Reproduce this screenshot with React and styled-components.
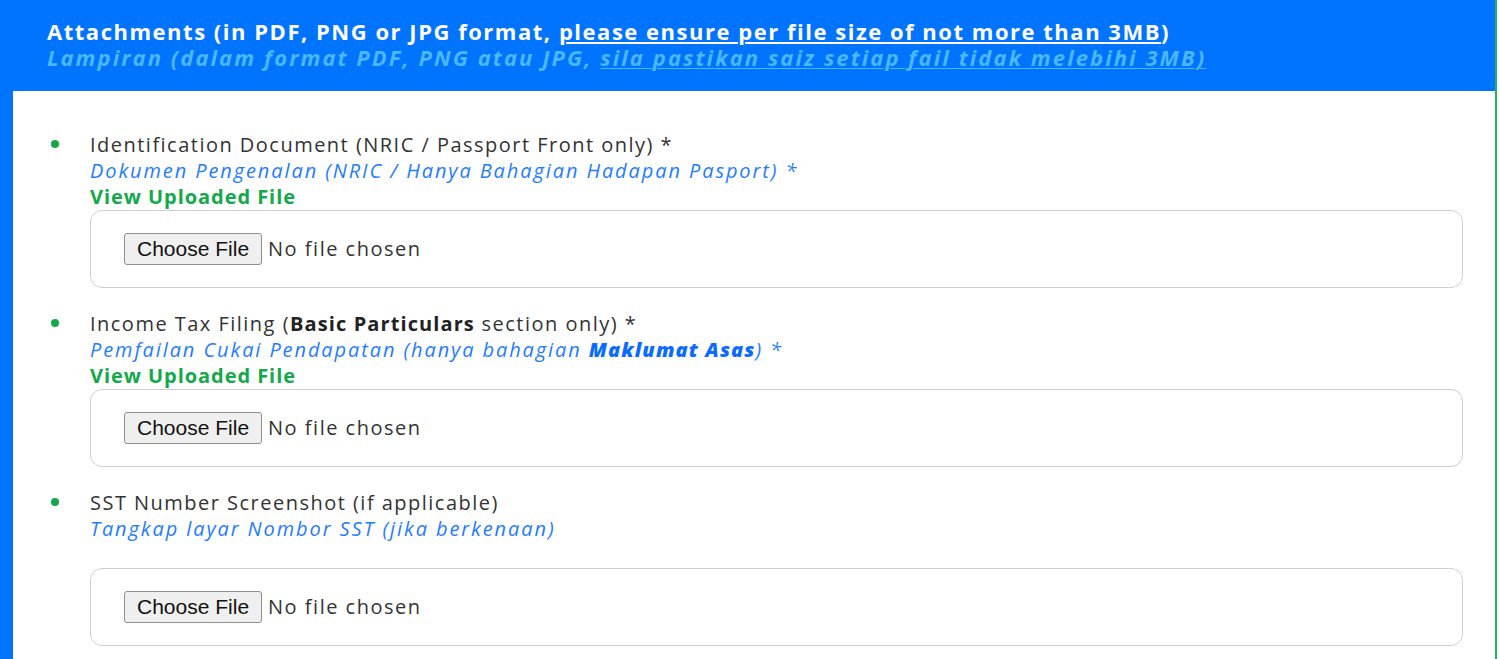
import styled, { createGlobalStyle } from "styled-components"

const GlobalStyle = createGlobalStyle`
  html, body {
    margin: 0;
    padding: 0;
    background: #ffffff;
  }
  body {
    font-family: "Open Sans", "Liberation Sans", sans-serif;
  }
`

const items = [
  {
    title: <>Identification Document (NRIC / Passport Front only) *</>,
    subtitle: <>Dokumen Pengenalan (NRIC / Hanya Bahagian Hadapan Pasport) *</>,
    uploaded: true,
  },
  {
    title: <>Income Tax Filing (<b>Basic Particulars</b> section only) *</>,
    subtitle: <>Pemfailan Cukai Pendapatan (hanya bahagian <b>Maklumat Asas</b>) *</>,
    uploaded: true,
  },
  {
    title: <>SST Number Screenshot (if applicable)</>,
    subtitle: <>Tangkap layar Nombor SST (jika berkenaan)</>,
    uploaded: false,
  },
]

export default function App () {
  return (
    <>
      <GlobalStyle />
      <Card>
        <Header>
          <HeaderTitle>
            Attachments (in PDF, PNG or JPG format, <u>please ensure per file size of not more than 3MB</u>)
          </HeaderTitle>
          <HeaderSubtitle>
            Lampiran (dalam format PDF, PNG atau JPG, <u>sila pastikan saiz setiap fail tidak melebihi 3MB)</u>
          </HeaderSubtitle>
        </Header>

        <Body>
          <List>
            {items.map((item, i) => (
              <Item key={i}>
                <Title>{item.title}</Title>
                <Subtitle>{item.subtitle}</Subtitle>
                <ViewLink $hidden={!item.uploaded}>
                  {item.uploaded ? "View Uploaded File" : "\u00a0"}
                </ViewLink>
                <UploadBox>
                  <FileInput type="file" accept=".pdf,.png,.jpg,.jpeg" />
                </UploadBox>
              </Item>
            ))}
          </List>
        </Body>
      </Card>
    </>
  )
}

const Card = styled.section`
  width: 1497px;
  height: 659px;
  box-sizing: border-box;
  border-left: 13px solid #0073ff;
  border-right: 2px solid #22b35e;
  display: flex;
  flex-direction: column;
  overflow: hidden;
`

const Header = styled.header`
  background: #0073ff;
  height: 91px;
  box-sizing: border-box;
  margin-left: -13px;
  padding: 18px 0 0 47px;
  font-family: "Open Sans", sans-serif;
  font-weight: 700;
  font-size: 22px;
  line-height: 26px;
  white-space: nowrap;
`

const HeaderTitle = styled.div`
  color: #ffffff;
  letter-spacing: 1.52px;

  u {
    text-decoration-thickness: 2px;
    text-underline-offset: 2px;
  }
`

const HeaderSubtitle = styled.div`
  color: #4ab8ff;
  font-style: italic;
  letter-spacing: 2.05px;

  u {
    text-decoration-thickness: 1px;
    text-underline-offset: 2px;
  }
`

const Body = styled.div`
  flex: 1;
  padding: 41px 32px 0 0;
`

const List = styled.ul`
  list-style: none;
  margin: 0;
  padding: 0 0 0 77px;
  display: flex;
  flex-direction: column;
  gap: 23px;
`

const Item = styled.li`
  position: relative;
  font-size: 20px;
  line-height: 26px;
  color: #333333;
  white-space: nowrap;

  &::before {
    content: "";
    position: absolute;
    left: -39px;
    top: 8px;
    width: 8px;
    height: 8px;
    border-radius: 50%;
    background: #13a84a;
  }
`

const Title = styled.div`
  letter-spacing: 1.48px;

  b {
    font-weight: 700;
    color: #222222;
    letter-spacing: 1.1px;
  }
`

const Subtitle = styled.div`
  color: #1f7cff;
  font-style: italic;
  letter-spacing: 1.9px;

  b {
    font-weight: 800;
    color: #0a6cff;
    letter-spacing: 1.1px;
  }
`

const ViewLink = styled.a`
  display: block;
  color: #13a84a;
  font-weight: 700;
  letter-spacing: 0.95px;
  cursor: pointer;
  visibility: ${props => (props.$hidden ? "hidden" : "visible")};
`

const UploadBox = styled.div`
  height: 78px;
  box-sizing: border-box;
  border: 1px solid #cfcfcf;
  border-radius: 12px;
  display: flex;
  align-items: center;
  padding: 0 33px;
`

const FileInput = styled.input`
  font-family: "Open Sans", sans-serif;
  font-size: 20px;
  color: #333333;
  letter-spacing: 1.5px;

  &::file-selector-button {
    font-family: "Liberation Sans", Arial, sans-serif;
    font-size: 21px;
    letter-spacing: 0;
    color: #111111;
    background: #efefef;
    border: 1px solid #8f8f8f;
    border-radius: 3px;
    padding: 3px 12px;
    margin-right: 6px;
  }
`
